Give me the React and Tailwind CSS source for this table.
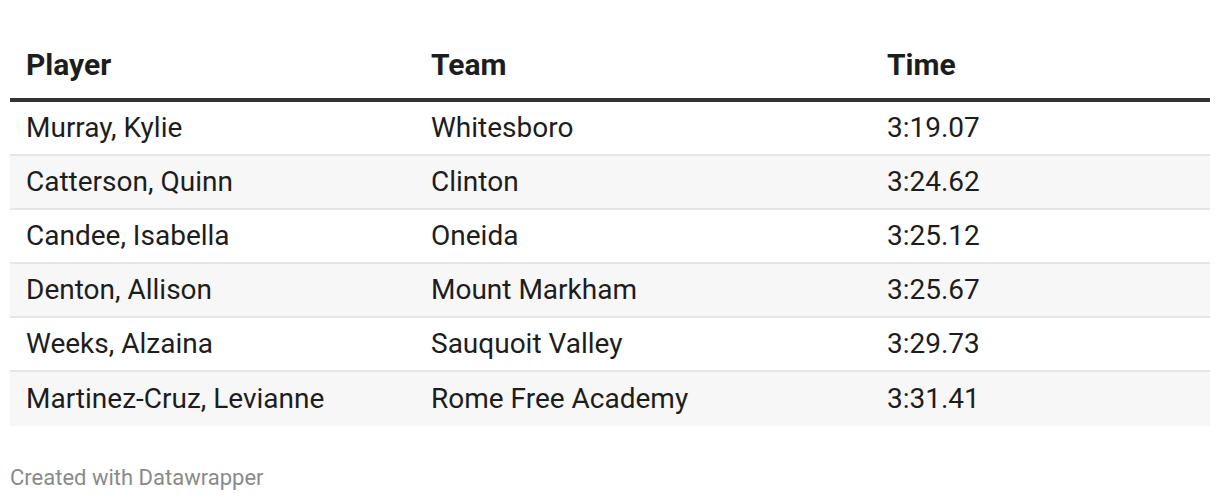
export default function App() {
  const rows = [
    ["Murray, Kylie", "Whitesboro", "3:19.07"],
    ["Catterson, Quinn", "Clinton", "3:24.62"],
    ["Candee, Isabella", "Oneida", "3:25.12"],
    ["Denton, Allison", "Mount Markham", "3:25.67"],
    ["Weeks, Alzaina", "Sauquoit Valley", "3:29.73"],
    ["Martinez-Cruz, Levianne", "Rome Free Academy", "3:31.41"],
  ];
  return (
    <div className="w-[1220px] h-[500px] bg-white px-[10px] pt-[30px]" style={{ fontFamily: "Roboto, sans-serif" }}>
      <div className="flex h-[72px] items-center border-b-[4px] border-[#333333] text-[30px] font-bold text-[#1d1d1d]">
        <div className="w-[404px] pl-[16px]">Player</div>
        <div className="w-[456px] pl-[17px]">Team</div>
        <div className="flex-1 pl-[17px]">Time</div>
      </div>
      {rows.map((r, i) => (
        <div
          key={i}
          className={`flex h-[54px] items-center text-[28px] text-[#1d1d1d] ${i % 2 === 1 ? "bg-[#f7f7f7]" : "bg-white"} ${i < rows.length - 1 ? "border-b-2 border-[#e6e6e6]" : ""}`}
        >
          <div className="w-[404px] pl-[16px]">{r[0]}</div>
          <div className="w-[456px] pl-[17px]">{r[1]}</div>
          <div className="flex-1 pl-[17px]">{r[2]}</div>
        </div>
      ))}
      <div className="mt-[35px] text-[22px] text-[#8a8a8a]">Created with Datawrapper</div>
    </div>
  );
}
